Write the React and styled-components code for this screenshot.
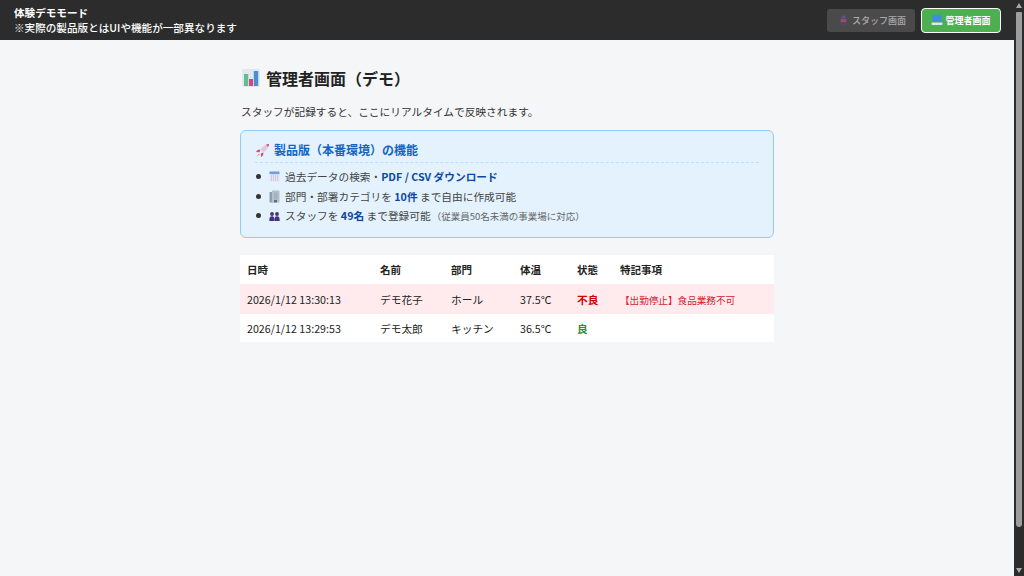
import styled, { createGlobalStyle } from "styled-components";

const GlobalStyle = createGlobalStyle`
    html {
        overflow: hidden;
    }
    body {
        margin: 0;
        background: #F5F6F8;
        color: #222222;
        font-family: "Noto Sans CJK JP", "Noto Sans", sans-serif;
    }
`;

const ChartIcon = ({ size = 18 }) => (
    <svg width={size} height={size} viewBox="0 0 18 18">
        <rect x="0" y="0" width="18" height="18" rx="2" fill="#E2E8EE" />
        <rect x="2" y="5" width="4.2" height="12" fill="#62BE92" />
        <rect x="7" y="10" width="4" height="7" fill="#D8457F" />
        <rect x="11.8" y="2" width="4.4" height="15" fill="#4A8FD0" />
    </svg>
);

const RocketIcon = () => (
    <svg width="15" height="15" viewBox="0 0 15 15">
        <path d="M14 1 C10.5 1.4 7.5 3.4 5.5 6.5 L8.5 9.5 C11.6 7.5 13.6 4.5 14 1Z" fill="#E4C8D8" />
        <path d="M14 1 C13.9 2 13.6 3 13.2 3.9 L11.1 1.8 C12 1.4 13 1.1 14 1Z" fill="#D8457F" />
        <path d="M5.5 6.5 L2.5 7 L1 9 L4.5 9.2Z" fill="#D8457F" />
        <path d="M8.5 9.5 L8 12.5 L6 14 L5.8 10.5Z" fill="#D8457F" />
        <path d="M4 10.5 L1 14 L4.8 11.4Z" fill="#F0A040" />
    </svg>
);

const CalendarIcon = () => (
    <svg width="11" height="11" viewBox="0 0 11 11">
        <rect x="0.5" y="0.5" width="10" height="10" fill="#E6E4F0" />
        <rect x="0.5" y="0.5" width="10" height="2.6" fill="#6FA0DC" />
        <path d="M2 5h7M2 7h7M2 9h7" stroke="#B8AED4" strokeWidth="1" strokeDasharray="1 1" />
    </svg>
);

const BuildingIcon = () => (
    <svg width="11" height="13" viewBox="0 0 11 13">
        <rect x="0.5" y="2" width="4" height="10.5" rx="0.5" fill="#8FA0AC" />
        <rect x="3" y="0.5" width="7.5" height="12" rx="0.5" fill="#B4C0CA" />
        <rect x="5" y="2.5" width="3.6" height="7" fill="#A3B2BE" />
        <rect x="5" y="10" width="3" height="2.5" fill="#5F6E7A" />
    </svg>
);

const PeopleIcon = () => (
    <svg width="11" height="9" viewBox="0 0 11 9">
        <circle cx="3" cy="2" r="1.9" fill="#46307E" />
        <circle cx="8" cy="2" r="1.9" fill="#46307E" />
        <path d="M0.3 9 C0.3 5.5 1 4.2 3 4.2 C5 4.2 5.5 5.5 5.5 9Z" fill="#46307E" />
        <path d="M5.5 9 C5.5 5.5 6 4.2 8 4.2 C10 4.2 10.7 5.5 10.7 9Z" fill="#46307E" />
    </svg>
);

const StaffIcon = () => (
    <svg width="9" height="11" viewBox="0 0 9 11">
        <rect x="2.4" y="0.4" width="4.2" height="3.4" rx="1.2" fill="#5A5290" />
        <rect x="1.6" y="4.2" width="5.8" height="3" fill="#A04A68" />
        <rect x="2" y="7.6" width="2.1" height="3.2" fill="#4E4A78" />
        <rect x="4.9" y="7.6" width="2.1" height="3.2" fill="#4E4A78" />
    </svg>
);

const AdminIcon = () => (
    <svg width="12" height="12" viewBox="0 0 12 12">
        <rect x="1.5" y="0.5" width="9" height="7.5" rx="1" fill="#3F8FD8" />
        <rect x="0.5" y="8.5" width="11" height="2.5" rx="1" fill="#DCE6EE" />
    </svg>
);

const rows = [
    {
        time: "2026/1/12 13:30:13",
        name: "デモ花子",
        dept: "ホール",
        temp: "37.5℃",
        status: "不良",
        note: "【出勤停止】食品業務不可",
        bad: true,
    },
    {
        time: "2026/1/12 13:29:53",
        name: "デモ太郎",
        dept: "キッチン",
        temp: "36.5℃",
        status: "良",
        note: "",
        bad: false,
    },
];

const App = () => {
    return (
        <Shell>
            <GlobalStyle />
            <Page>
                <DemoBar>
                    <DemoText>
                        <DemoTitle>体験デモモード</DemoTitle>
                        <DemoNote>※実際の製品版とはUIや機能が一部異なります</DemoNote>
                    </DemoText>
                    <SwitchWrap>
                        <SwitchButton>
                            <StaffIcon />
                            スタッフ画面
                        </SwitchButton>
                        <SwitchButton $active>
                            <AdminIcon />
                            管理者画面
                        </SwitchButton>
                    </SwitchWrap>
                </DemoBar>

                <Main>
                    <PageTitle>
                        <ChartIcon />
                        管理者画面（デモ）
                    </PageTitle>
                    <Lead>スタッフが記録すると、ここにリアルタイムで反映されます。</Lead>

                    <InfoBox>
                        <InfoTitle>
                            <RocketIcon />
                            製品版（本番環境）の機能
                        </InfoTitle>
                        <InfoList>
                            <li>
                                <CalendarIcon />
                                <span>過去データの検索・<strong>PDF / CSV ダウンロード</strong></span>
                            </li>
                            <li>
                                <BuildingIcon />
                                <span>部門・部署カテゴリを <strong>10件</strong> まで自由に作成可能</span>
                            </li>
                            <li>
                                <PeopleIcon />
                                <span>スタッフを <strong>49名</strong> まで登録可能<small>（従業員50名未満の事業場に対応）</small></span>
                            </li>
                        </InfoList>
                    </InfoBox>

                    <RecordTable>
                        <thead>
                            <tr>
                                <DateHead>日時</DateHead>
                                <NameHead>名前</NameHead>
                                <DeptHead>部門</DeptHead>
                                <TempHead>体温</TempHead>
                                <StatusHead>状態</StatusHead>
                                <th>特記事項</th>
                            </tr>
                        </thead>
                        <tbody>
                            {rows.map((row) => (
                                <RecordRow key={row.time} $bad={row.bad}>
                                    <td>{row.time}</td>
                                    <td>{row.name}</td>
                                    <td>{row.dept}</td>
                                    <td>{row.temp}</td>
                                    <td><Status $bad={row.bad}>{row.status}</Status></td>
                                    <td><Note>{row.note}</Note></td>
                                </RecordRow>
                            ))}
                        </tbody>
                    </RecordTable>
                </Main>
            </Page>

            <ScrollBar>
                <ScrollArrow />
                <ScrollThumb />
                <ScrollArrow $down />
            </ScrollBar>
        </Shell>
    );
};

export default App;

const Shell = styled.div`
    display: flex;
    height: 100vh;
    overflow: hidden;
`;

const Page = styled.div`
    flex: 1;
    min-width: 0;
`;

const ScrollBar = styled.div`
    flex: 0 0 10px;
    display: flex;
    flex-direction: column;
    align-items: center;
    justify-content: space-between;
    padding: 3px 0;
    box-sizing: border-box;
    background: #2C2C2C;
`;

const ScrollArrow = styled.div`
    width: 0;
    height: 0;
    border-left: 3.5px solid transparent;
    border-right: 3.5px solid transparent;
    border-top: ${(props) => (props.$down ? "5px solid #A8A8A8" : "none")};
    border-bottom: ${(props) => (props.$down ? "none" : "5px solid #A8A8A8")};
`;

const ScrollThumb = styled.div`
    width: 6px;
    height: 515px;
    margin-top: 4px;
    margin-bottom: auto;
    border-radius: 1px 1px 3px 3px;
    background: #9E9E9E;
`;

const DemoBar = styled.header`
    height: 40px;
    box-sizing: border-box;
    padding: 0 13px 0 14px;
    background: #2C2C2C;
    color: #FFFFFF;
    display: flex;
    align-items: center;
    justify-content: space-between;
`;

const DemoText = styled.div`
    font-size: 10.6px;
    line-height: 15px;
`;

const DemoTitle = styled.div`
    font-weight: 700;
`;

const DemoNote = styled.div`
    font-weight: 500;
`;

const SwitchWrap = styled.div`
    display: flex;
    align-items: center;
    gap: 6px;
`;

const SwitchButton = styled.div`
    display: flex;
    align-items: center;
    justify-content: center;
    gap: ${(props) => (props.$active ? "2px" : "4px")};
    box-sizing: border-box;
    height: ${(props) => (props.$active ? "25px" : "23px")};
    width: ${(props) => (props.$active ? "80px" : "88px")};
    padding-left: ${(props) => (props.$active ? "0" : "3px")};
    border-radius: ${(props) => (props.$active ? "4px" : "3px")};
    font-size: 9px;
    font-weight: ${(props) => (props.$active ? 700 : 500)};
    color: ${(props) => (props.$active ? "#FFFFFF" : "#AAAAAA")};
    background: ${(props) => (props.$active ? "#4CAF50" : "#4A4A4A")};
    border: ${(props) => (props.$active ? "1px solid #FFFFFF" : "none")};
`;

const Main = styled.main`
    width: 534px;
    margin: 0 auto;
    padding-top: 25px;
`;

const PageTitle = styled.h2`
    margin: 0 0 13px 2px;
    display: flex;
    align-items: center;
    gap: 6px;
    font-size: 16px;
    line-height: 26px;
    font-weight: 700;
    color: #222222;
`;

const Lead = styled.p`
    margin: 0 0 10px;
    padding-left: 1px;
    font-size: 10.7px;
    line-height: 16px;
    color: #333333;
`;

const InfoBox = styled.section`
    box-sizing: border-box;
    height: 108px;
    padding: 10px 14px 0;
    background: #E3F2FD;
    border: 1px solid #90CAF9;
    border-radius: 6px;
`;

const InfoTitle = styled.div`
    display: flex;
    align-items: center;
    gap: 4px;
    padding-bottom: 3px;
    border-bottom: 1px dashed #BBDEFB;
    font-size: 12px;
    line-height: 18px;
    font-weight: 700;
    color: #1565C0;
`;

const InfoList = styled.ul`
    margin: 4px 0 0;
    padding: 0 0 0 14px;
    list-style: none;
    font-size: 10.7px;
    line-height: 19.5px;
    color: #444444;

    li {
        position: relative;
        display: flex;
        align-items: center;
        gap: 5px;
    }

    li svg {
        flex: 0 0 11px;
    }

    li::before {
        content: "";
        position: absolute;
        left: -13px;
        top: 7px;
        width: 5px;
        height: 5px;
        border-radius: 50%;
        background: #333333;
    }

    strong {
        font-weight: 700;
        color: #0D47A1;
    }

    small {
        font-size: 9.5px;
        color: #666666;
        margin-left: 1px;
    }
`;

const RecordTable = styled.table`
    width: 100%;
    margin-top: 17px;
    border-collapse: collapse;
    background: #FFFFFF;
    font-size: 10.7px;
    table-layout: fixed;

    th {
        box-sizing: border-box;
        height: 29px;
        padding: 0 7px;
        text-align: left;
        font-size: 10.5px;
        font-weight: 700;
        color: #222222;
    }

    td {
        padding: 0 7px;
        color: #222222;
    }
`;

const DateHead = styled.th`
    width: 133px;
`;

const NameHead = styled.th`
    width: 71px;
`;

const DeptHead = styled.th`
    width: 69px;
`;

const TempHead = styled.th`
    width: 57px;
`;

const StatusHead = styled.th`
    width: 43px;
`;

const RecordRow = styled.tr`
    height: ${(props) => (props.$bad ? "30px" : "28px")};
    background: ${(props) => (props.$bad ? "#FFEBEE" : "#FFFFFF")};
`;

const Status = styled.span`
    font-weight: 700;
    color: ${(props) => (props.$bad ? "#D50000" : "#2E8B3A")};
`;

const Note = styled.span`
    font-size: 9.6px;
    color: #D32030;
`;
